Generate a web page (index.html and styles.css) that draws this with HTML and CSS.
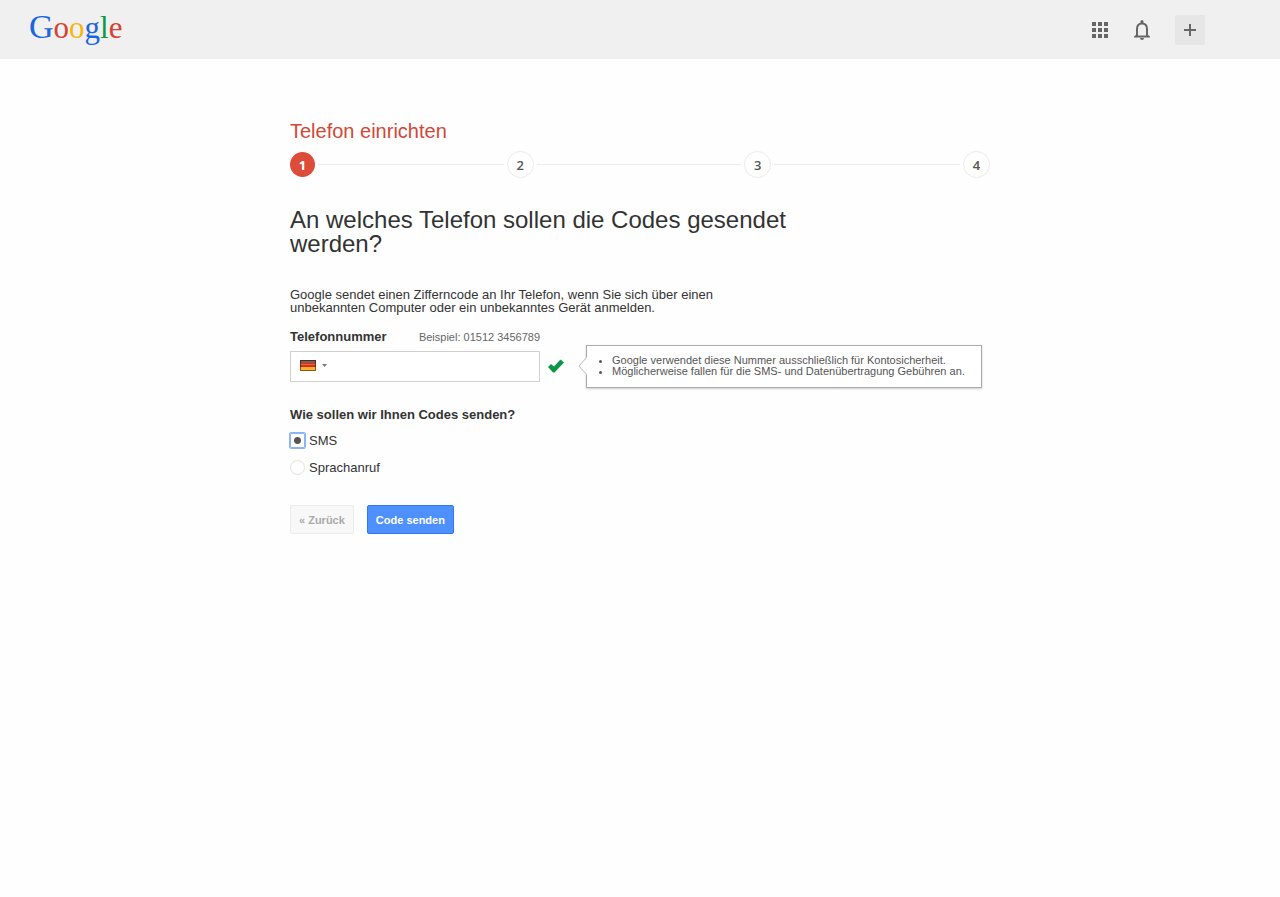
FILE: index.html
```html
<!DOCTYPE html>
<html lang="de">
<head>
    <meta charset="UTF-8">
    <meta name="viewport" content="width=device-width, initial-scale=1.0">
    <title>Telefon einrichten</title>
    <link rel="stylesheet" href="styles.css">
</head>
<body>
    <header class="header">
        <a href="#" class="logo"><span class="logo-cap blue">G</span><span class="red">o</span><span class="yellow">o</span><span class="blue">g</span><span class="green">l</span><span class="red">e</span></a>
        <div class="tools">
            <button type="button" class="tool" aria-label="Apps">
                <svg width="16" height="16" viewBox="0 0 16 16" fill="#666">
                    <path d="M0 0h4v4H0zM6 0h4v4H6zM12 0h4v4h-4zM0 6h4v4H0zM6 6h4v4H6zM12 6h4v4h-4zM0 12h4v4H0zM6 12h4v4H6zM12 12h4v4h-4z"/>
                </svg>
            </button>
            <button type="button" class="tool" aria-label="Benachrichtigungen">
                <svg width="18" height="20" viewBox="0 0 18 20">
                    <path d="M4 16V9C4 5.500 6 3.500 9 3.500S14 5.500 14 9v7" fill="none" stroke="#666" stroke-width="2"/>
                    <path d="M1 16.500L3.500 14.500V15.500h11v-1L17 16.500V17.500H1zM7.500 1.500a1.500 1.500 0 0 1 3 0V4h-3zM7 18h4a2 2 0 0 1-4 0z" fill="#666"/>
                </svg>
            </button>
            <button type="button" class="tool share" aria-label="Teilen">
                <svg width="12" height="12" viewBox="0 0 12 12" fill="#666">
                    <path d="M5 0h2v5h5v2H7v5H5V7H0V5h5z"/>
                </svg>
            </button>
        </div>
    </header>

    <main class="content">
        <h1 class="title">Telefon einrichten</h1>
        <div class="steps">
            <span class="step active">1</span>
            <span class="line"></span>
            <span class="step">2</span>
            <span class="line line-long"></span>
            <span class="step">3</span>
            <span class="line"></span>
            <span class="step">4</span>
        </div>

        <h2 class="question">An welches Telefon sollen die Codes gesendet werden?</h2>
        <p class="intro">Google sendet einen Zifferncode an Ihr Telefon, wenn Sie sich über einen unbekannten Computer oder ein unbekanntes Gerät anmelden.</p>

        <form>
            <div class="phone-head">
                <label for="phone" class="phone-label">Telefonnummer</label>
                <span class="example">Beispiel: 01512 3456789</span>
            </div>
            <div class="phone-row">
                <div class="phone-box">
                    <div class="country">
                        <svg width="16" height="11" viewBox="0 0 16 11">
                            <path d="M0 0h16v4H0z" fill="#3a2a26"/>
                            <path d="M1 1h14v2H1z" fill="#77615c"/>
                            <path d="M0 3h16v5H0z" fill="#dc2a1c"/>
                            <path d="M1 4h14v1H1z" fill="#f2644a"/>
                            <path d="M0 7h16v4H0z" fill="#f8b52c"/>
                            <path d="M.5.500h15v10H.5z" fill="none" stroke="#5b2a12" stroke-opacity=".7"/>
                        </svg>
                        <svg width="5" height="3" viewBox="0 0 5 3" fill="#777"><path d="M0 0h5L2.500 3z"/></svg>
                        <select class="country-select" aria-label="Land">
                            <option>Deutschland</option>
                        </select>
                    </div>
                    <input type="tel" id="phone" class="phone-input">
                </div>
                <svg class="check" width="16" height="14" viewBox="0 0 16 14">
                    <path d="M0 8l3-3 3 2.500L12.500.500 16 3.500 6.500 13.500H5z" fill="#0c9544"/>
                </svg>
                <div class="hint">
                    <svg class="hint-arrow" width="9" height="18" viewBox="0 0 9 18">
                        <path d="M9 0L1 9l8 9" fill="#fff" stroke="#bbb"/>
                    </svg>
                    <ul>
                        <li>Google verwendet diese Nummer ausschließlich für Kontosicherheit.</li>
                        <li>Möglicherweise fallen für die SMS- und Datenübertragung Gebühren an.</li>
                    </ul>
                </div>
            </div>

            <fieldset class="method">
                <legend>Wie sollen wir Ihnen Codes senden?</legend>
                <label class="option"><input type="radio" name="method" checked>SMS</label>
                <label class="option"><input type="radio" name="method">Sprachanruf</label>
            </fieldset>

            <div class="buttons">
                <button type="button" class="button back" disabled>« Zurück</button>
                <button type="submit" class="button send">Code senden</button>
            </div>
        </form>
    </main>
</body>
</html>
```

FILE: styles.css
```css
* {
    box-sizing: border-box;
}

body {
    margin: 0;
    background: #fefefe;
    color: #333;
    font-family: "Liberation Sans", Arial, sans-serif;
    font-size: 13px;
    line-height: 13px;
}

.header {
    display: flex;
    align-items: center;
    justify-content: space-between;
    height: 59px;
    padding: 0 75px 0 29px;
    background: #f0f0f0;
}

.logo {
    font-family: "Liberation Serif", "Times New Roman", serif;
    font-size: 31px;
    line-height: 40px;
    padding-bottom: 4px;
    text-decoration: none;
}

.logo-cap {
    font-size: 34px;
}

.blue { color: #1a66e0; }
.red { color: #d8402f; }
.yellow { color: #f5b70f; }
.green { color: #0a9a4a; }

.tools {
    display: flex;
    align-items: center;
    gap: 12px;
}

.tool {
    display: flex;
    align-items: center;
    justify-content: center;
    width: 30px;
    height: 30px;
    padding: 0;
    border: none;
    background: none;
}

.share {
    margin-left: 6px;
    border-radius: 2px;
    background: #e6e6e6;
}

.content {
    max-width: 700px;
    margin: 0 auto;
    padding-top: 60px;
}

.title {
    margin: 0;
    color: #d14836;
    font-size: 20px;
    font-weight: normal;
    line-height: 24px;
}

.steps {
    display: flex;
    align-items: center;
    margin-top: 8px;
}

.step {
    width: 27px;
    height: 27px;
    border: 1px solid #ebebeb;
    border-radius: 50%;
    color: #555;
    font-family: "Open Sans", sans-serif;
    font-size: 13px;
    font-weight: 600;
    line-height: 26px;
    text-align: center;
}

.active {
    width: 25px;
    height: 25px;
    border: none;
    background: #dd4b39;
    color: #fff;
    font-weight: bold;
}

.line {
    flex: 10;
    height: 1px;
    margin: 0 3px;
    background: #ebebeb;
}

.line-long {
    flex: 11;
}

.question {
    max-width: 520px;
    margin: 30px 0 0;
    font-size: 24px;
    font-weight: normal;
    line-height: 24px;
}

.intro {
    max-width: 450px;
    margin: 32px 0 0;
}

.phone-head {
    display: flex;
    align-items: center;
    justify-content: space-between;
    width: 250px;
    margin-top: 15px;
}

.phone-label,
.method legend {
    font-weight: bold;
}

.example {
    padding-top: 2px;
    color: #666;
    font-size: 11px;
}

.phone-row {
    display: flex;
    align-items: center;
    margin-top: 1px;
}

.phone-box {
    display: flex;
    align-items: center;
    width: 250px;
    height: 31px;
    border: 1px solid #d0d0d0;
    background: #fff;
}

.country {
    display: flex;
    align-items: center;
    gap: 6px;
    position: relative;
    padding: 0 4px 2px 9px;
}

.country-select {
    position: absolute;
    inset: 0;
    width: 100%;
    opacity: 0;
}

.phone-input {
    flex: 1;
    min-width: 0;
    height: 28px;
    border: none;
    outline: none;
    background: none;
    font: inherit;
}

.check {
    margin: 0 22px 2px 8px;
}

.hint {
    position: relative;
    padding: 9px 16px 10px 25px;
    border: 1px solid #aaa;
    background: #fff;
    box-shadow: 0 1px 2px rgba(0, 0, 0, 0.2);
    color: #555;
    font-size: 11px;
    line-height: 11px;
    white-space: nowrap;
}

.hint-arrow {
    position: absolute;
    top: 11px;
    left: -9px;
}

.hint ul {
    margin: 0;
    padding: 0;
}

.method {
    margin: 20px 0 0;
    padding: 0;
    border: none;
}

.method legend {
    margin-bottom: 12px;
    padding: 0;
}

.option {
    display: flex;
    align-items: center;
    gap: 4px;
    height: 15px;
    margin-bottom: 12px;
}

.option input {
    appearance: none;
    width: 15px;
    height: 15px;
    margin: 0;
    border: 1px solid #e2e2e2;
    border-radius: 50%;
    background: #fff;
}

.option input:checked {
    border: 1px solid #8ab4f5;
    border-radius: 1px;
    outline: 1px solid #8ab4f5;
    background: radial-gradient(circle, #555 3px, #fff 4px);
}

.buttons {
    display: flex;
    gap: 13px;
    margin-top: 18px;
}

.button {
    height: 29px;
    padding: 0 8px;
    border: 1px solid #3079ed;
    border-radius: 2px;
    font-family: inherit;
    font-size: 11px;
    font-weight: bold;
}

.back {
    border-color: #ececec;
    background: #f8f8f8;
    color: #aaa;
}

.send {
    background: #4d90fe;
    color: #fff;
}
```
